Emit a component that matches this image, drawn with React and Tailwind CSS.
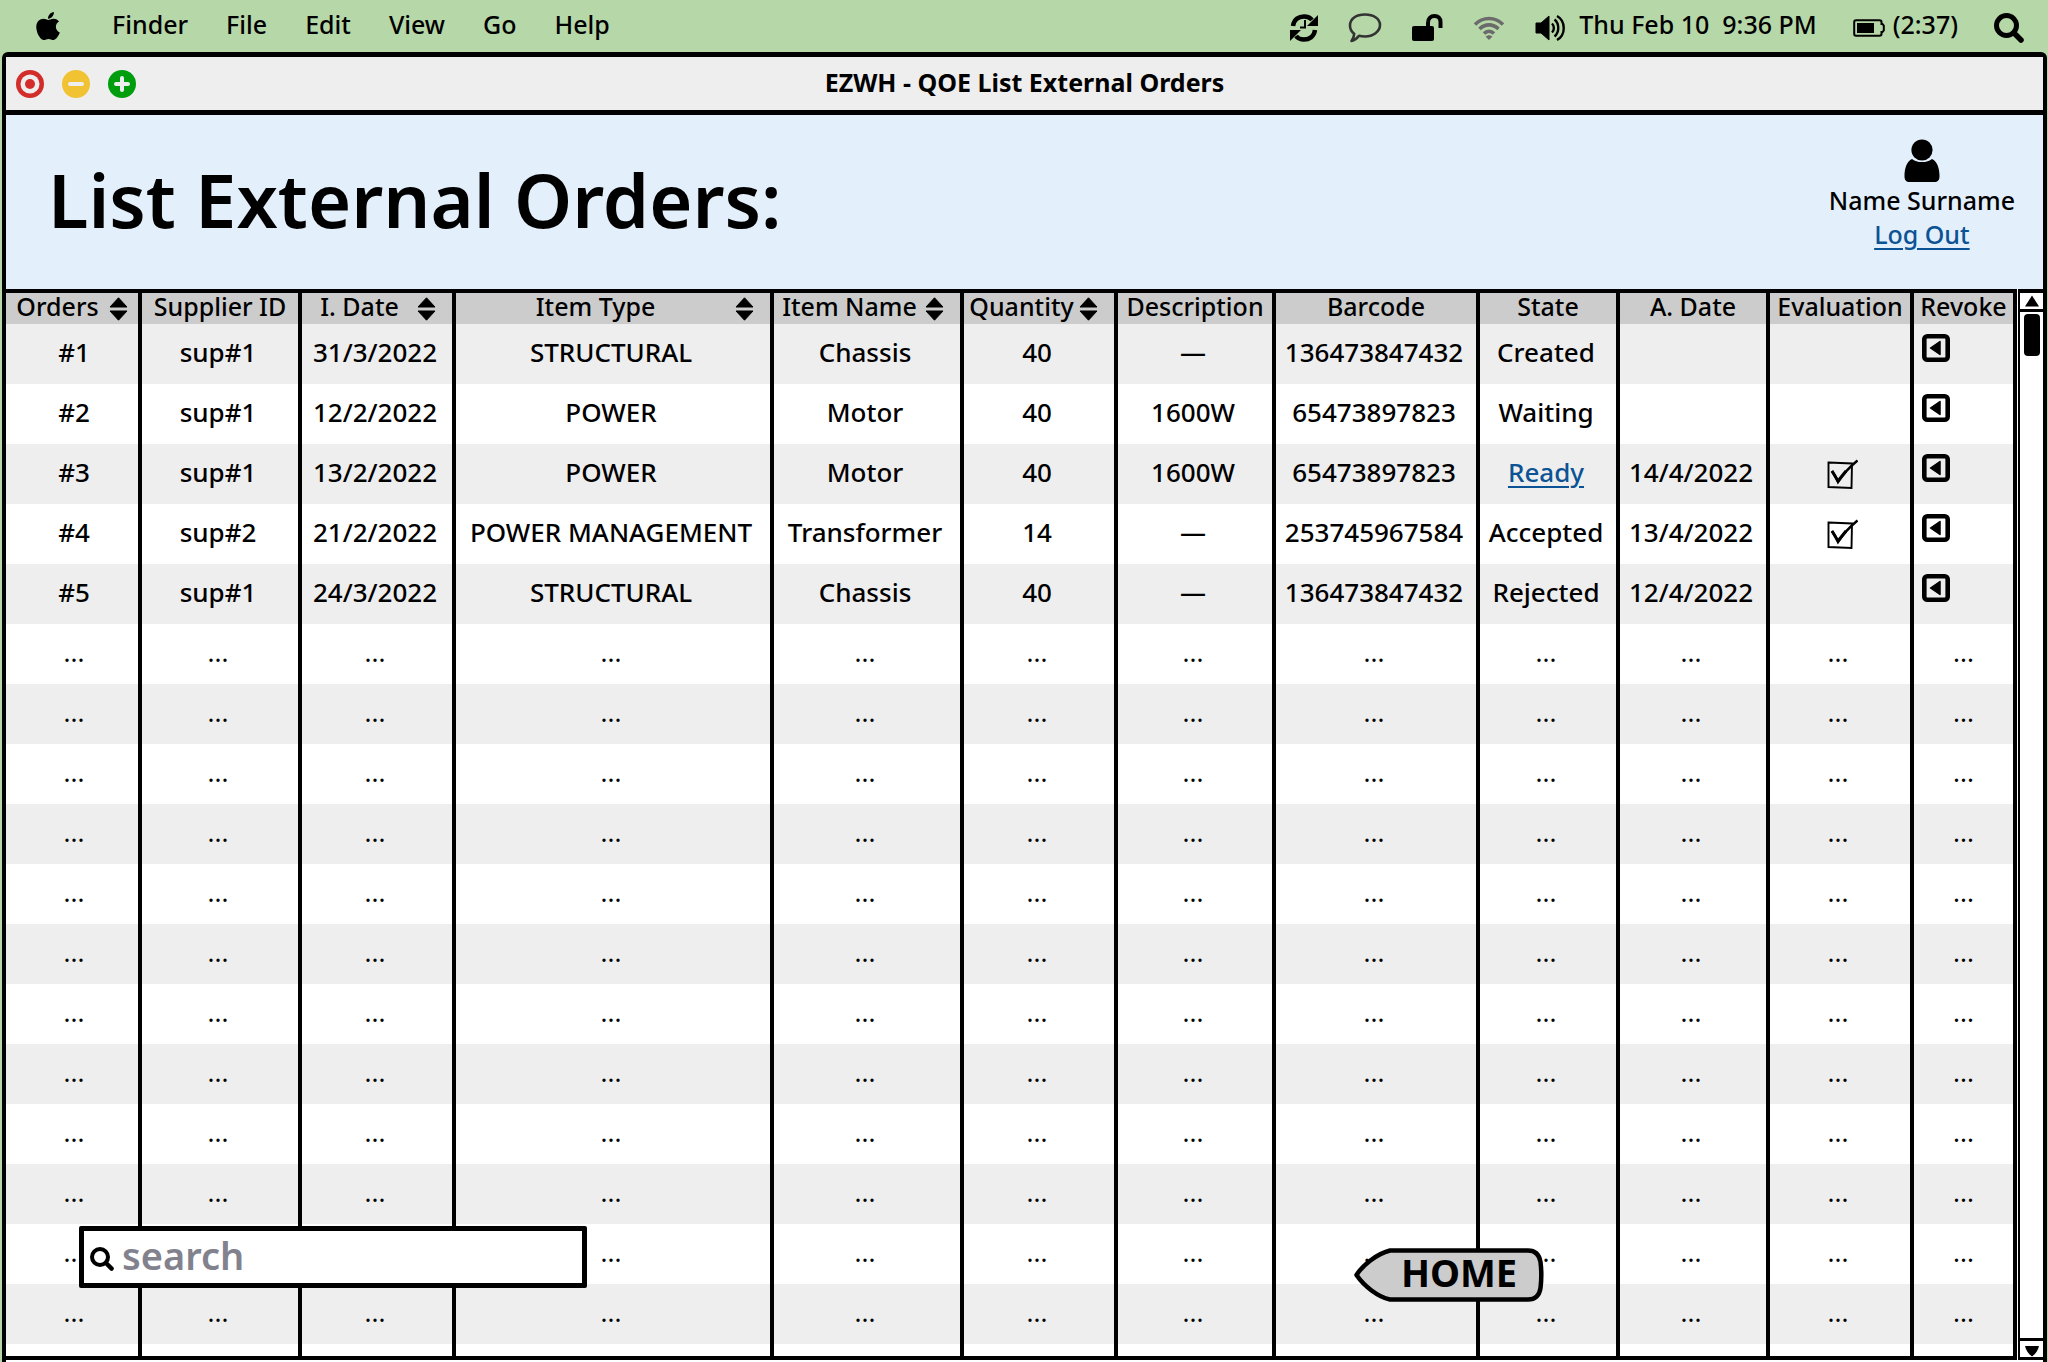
import { FaApple } from "react-icons/fa";

const MENU = ["Finder", "File", "Edit", "View", "Go", "Help"];

const COLUMNS = [
  { label: "Orders", width: "w-[136px]", sort: "pr-[10px]", pad: "pl-1" },
  { label: "Supplier ID", width: "w-[160px]", pad: "pr-1" },
  { label: "I. Date", width: "w-[154px]", sort: "pr-4", pad: "pr-1" },
  { label: "Item Type", width: "w-[318px]", sort: "pr-4", pad: "pr-1" },
  { label: "Item Name", width: "w-[190px]", sort: "pr-4", pad: "pr-1" },
  { label: "Quantity", width: "w-[154px]", sort: "pr-4", pad: "pr-1" },
  { label: "Description", width: "w-[158px]", pad: "pr-1" },
  { label: "Barcode", width: "w-[204px]", pad: "pr-1" },
  { label: "State", width: "w-[140px]", pad: "pr-1" },
  { label: "A. Date", width: "w-[150px]", pad: "pr-1" },
  { label: "Evaluation", width: "w-[144px]", pad: "pr-1" },
  { label: "Revoke", width: "w-[103px]", pad: "p-0" },
];

const ORDERS = [
  ["#1", "sup#1", "31/3/2022", "STRUCTURAL", "Chassis", "40", "—", "136473847432", "Created", "", false],
  ["#2", "sup#1", "12/2/2022", "POWER", "Motor", "40", "1600W", "65473897823", "Waiting", "", false],
  ["#3", "sup#1", "13/2/2022", "POWER", "Motor", "40", "1600W", "65473897823", "Ready", "14/4/2022", true],
  ["#4", "sup#2", "21/2/2022", "POWER MANAGEMENT", "Transformer", "14", "—", "253745967584", "Accepted", "13/4/2022", true],
  ["#5", "sup#1", "24/3/2022", "STRUCTURAL", "Chassis", "40", "—", "136473847432", "Rejected", "12/4/2022", false],
];

const EMPTY_ROWS = Array.from({ length: 12 }, (_, i) => i);

function SyncIcon() {
  return (
    <svg className="h-7 w-7" viewBox="0 0 28 28" fill="none" stroke="black">
      <path d="M3 12C4 5 9 2.500 14 2.500C18 2.500 20.500 4 22 6" strokeWidth="4.500" />
      <path d="M28 1V12H17Z" fill="black" stroke="none" />
      <path d="M25 16C24 23 19 25.500 14 25.500C10 25.500 7.500 24 6 22" strokeWidth="4.500" />
      <path d="M0 27V16H11Z" fill="black" stroke="none" />
      <path d="M15 6V13.500H10" strokeWidth="2" />
    </svg>
  );
}

function ChatIcon() {
  return (
    <svg className="h-[30px] w-[34px]" viewBox="0 0 34 30" fill="none" stroke="#333333" strokeWidth="2.600" strokeLinejoin="round">
      <path d="M17 1.500C26 1.500 32 6 32 12C32 18.500 25 23.500 17 23.500C14.500 23.500 12.500 23.200 11 22.800C9 25.500 6 27.500 3.500 28C5 26 6 23.500 6.200 20.800C3.200 18.500 2 15.500 2 12.500C2 6 8 1.500 17 1.500Z" />
    </svg>
  );
}

function UnlockIcon() {
  return (
    <svg className="h-7 w-[31px]" viewBox="0 0 31 28">
      <rect x="0" y="12" width="22" height="15" rx="2" fill="black" />
      <path d="M16 13V9C16 4 19 2 22.500 2C26 2 28.500 4 28.500 8V14" fill="none" stroke="black" strokeWidth="4" />
    </svg>
  );
}

function WifiIcon() {
  return (
    <svg className="h-6 w-8" viewBox="0 0 32 24" fill="none" stroke="#6b6b6b" strokeWidth="3.600">
      <path d="M2 8.500C10 0.500 22 0.500 30 8.500" />
      <path d="M6.500 13C12 7.500 20 7.500 25.500 13" />
      <path d="M11 17.500C14 14.500 18 14.500 21 17.500" />
      <path d="M16 19L19.500 20.500L16 24L12.500 20.500Z" fill="#6b6b6b" stroke="none" />
    </svg>
  );
}

function VolumeIcon() {
  return (
    <svg className="h-7 w-8" viewBox="0 0 32 28" fill="none" stroke="black" strokeWidth="2.400">
      <path d="M1 9H6L14 2V26L6 19H1Z" fill="black" stroke="black" strokeWidth="1" strokeLinejoin="round" />
      <path d="M17 9.500C19.500 12 19.500 16 17 18.500" />
      <path d="M19.500 5.500C24.500 9.500 24.500 18.500 19.500 22.500" />
      <path d="M22 2C31 7 31 21 22 26" />
    </svg>
  );
}

function BatteryIcon() {
  return (
    <svg className="h-[18px] w-8" viewBox="0 0 32 18">
      <path d="M3 1.200H26.500Q28.500 1.200 28.500 3V5H29.500L30.800 6.500V11.500L29.500 13H28.500V15Q28.500 16.800 26.500 16.800H3Q1.200 16.800 1.200 15V3Q1.200 1.200 3 1.200Z" fill="none" stroke="black" strokeWidth="2" />
      <rect x="4" y="4" width="17" height="10" fill="black" />
    </svg>
  );
}

function SearchIcon({ className }) {
  return (
    <svg className={className} viewBox="0 0 30 30" fill="none" stroke="black" strokeLinecap="round">
      <circle cx="12.500" cy="12.500" r="10" strokeWidth="5" />
      <path d="M20 20L27 27" strokeWidth="5.500" />
    </svg>
  );
}

function SortIcon() {
  return (
    <svg className="h-6 w-[19px] shrink-0" viewBox="0 0 19 24" stroke="black" strokeWidth="1" strokeLinejoin="round">
      <path d="M9.500 0.800L18 10H1Z" />
      <path d="M9.500 23.200L18 14H1Z" />
    </svg>
  );
}

function WindowButtons() {
  return (
    <div className="flex gap-[18px] pl-[10px]">
      <button type="button" aria-label="Close">
        <svg className="h-7 w-7" viewBox="0 0 28 28">
          <circle cx="14" cy="14" r="14" fill="#d32d2b" />
          <circle cx="14" cy="14" r="9.500" fill="#eeeeee" />
          <circle cx="14" cy="14" r="5" fill="#d32d2b" />
        </svg>
      </button>
      <button type="button" aria-label="Minimize">
        <svg className="h-7 w-7" viewBox="0 0 28 28">
          <circle cx="14" cy="14" r="14" fill="#f1c232" />
          <path d="M8 14H20" stroke="#eeeeee" strokeWidth="4" strokeLinecap="round" />
        </svg>
      </button>
      <button type="button" aria-label="Zoom">
        <svg className="h-7 w-7" viewBox="0 0 28 28">
          <circle cx="14" cy="14" r="14" fill="#009e0f" />
          <path d="M8 14H20M14 8V20" stroke="#eeeeee" strokeWidth="4" strokeLinecap="round" />
        </svg>
      </button>
    </div>
  );
}

function EvaluatedBox({ order }) {
  return (
    <label className="relative inline-block h-[30px] w-8 align-middle">
      <input type="checkbox" defaultChecked aria-label={`Evaluation of order ${order}`} className="absolute inset-0 h-full w-full appearance-none" />
      <svg className="pointer-events-none absolute inset-0 h-full w-full" viewBox="0 0 32 30" fill="none" stroke="black">
        <path d="M2.500 3.500L26 4.500L25.500 29L2.500 28Z" strokeWidth="1.900" />
        <path d="M6 12C8 15 10 18.500 12 23C16.500 16 23 8.500 31.500 1.500" strokeWidth="2.400" />
        <path d="M6 12L12 22L20 12" strokeWidth="3" />
      </svg>
    </label>
  );
}

function RevokeButton({ order }) {
  return (
    <button type="button" aria-label={`Revoke order ${order}`} className="ml-2 mt-[10px] block h-7 w-7">
      <svg className="h-7 w-7" viewBox="0 0 28 28">
        <rect x="2.300" y="2.300" width="23.400" height="23.400" rx="3" fill="none" stroke="black" strokeWidth="4.600" />
        <path d="M8.500 14L18 7.500V20.500Z" fill="black" stroke="black" strokeWidth="1.500" strokeLinejoin="round" />
      </svg>
    </button>
  );
}

const cell = "h-[60px] border-r-4 border-black pb-1 text-center whitespace-nowrap";

function OrdersTable() {
  return (
    <table className="w-full table-fixed border-separate border-spacing-0 text-[26px] leading-8">
      <colgroup>
        {COLUMNS.map((c) => (
          <col key={c.label} className={c.width} />
        ))}
      </colgroup>
      <thead>
        <tr className="bg-[#cccccc] text-[25px] leading-[27px]">
          {COLUMNS.map((c) => (
            <th key={c.label} scope="col" className="h-[35px] border-t-4 border-r-4 border-black p-0 font-medium whitespace-nowrap">
              {c.sort ? (
                <button type="button" className={`flex w-full items-center ${c.sort}`}>
                  <span className="flex-1 pb-1 text-center">{c.label}</span>
                  <SortIcon />
                </button>
              ) : (
                <div className="flex justify-center pb-1">{c.label}</div>
              )}
            </th>
          ))}
        </tr>
      </thead>
      <tbody>
        {ORDERS.map((o) => (
          <tr key={o[0]} className="odd:bg-[#eeeeee] even:bg-white">
            {o.slice(0, 10).map((v, i) => (
              <td key={i} className={`${cell} ${COLUMNS[i].pad}`}>
                {v === "Ready" ? (
                  <a href="#ready" className="text-[#0b5394] underline decoration-2 underline-offset-4">
                    {v}
                  </a>
                ) : (
                  v
                )}
              </td>
            ))}
            <td className="border-r-4 border-black pb-1 pl-1 text-center">{o[10] && <EvaluatedBox order={o[0]} />}</td>
            <td className="border-r-4 border-black align-top">
              <RevokeButton order={o[0]} />
            </td>
          </tr>
        ))}
        {EMPTY_ROWS.map((r) => (
          <tr key={r} className="font-normal odd:bg-[#eeeeee] even:bg-white">
            {COLUMNS.map((c) => (
              <td key={c.label} className={`${cell} ${c.pad}`}>
                ...
              </td>
            ))}
          </tr>
        ))}
        <tr className="bg-white">
          {COLUMNS.map((c) => (
            <td key={c.label} className="h-4 border-r-4 border-b-4 border-black p-0" />
          ))}
        </tr>
      </tbody>
    </table>
  );
}

function ScrollBar() {
  return (
    <div className="ml-px flex w-[25px] shrink-0 flex-col border-t-4 border-b-3 border-l-2 border-black bg-white">
      <button type="button" aria-label="Scroll up" className="flex h-[19px] w-full items-center justify-center border-b-3 border-black">
        <svg className="h-3 w-4" viewBox="0 0 16 12">
          <path d="M8 0.500L15 11.500H1Z" />
        </svg>
      </button>
      <div className="flex flex-1 justify-center pt-[2px]">
        <div className="h-[42px] w-4 rounded-sm bg-black" />
      </div>
      <button type="button" aria-label="Scroll down" className="flex h-[19px] w-full items-end justify-center border-t-3 border-black">
        <svg className="h-3 w-4" viewBox="0 0 16 12">
          <path d="M1 1H15C14 5 12 9 8 11.500C4 9 2 5 1 1Z" />
        </svg>
      </button>
    </div>
  );
}

export default function App() {
  return (
    <div className="flex min-h-screen flex-col bg-[#b6d7a8] font-['Noto_Sans','Open_Sans',sans-serif] font-medium text-black">
      <header className="flex h-[52px] items-center justify-between pr-6 pl-8 text-[25px] leading-8">
        <nav className="flex items-center gap-[38px] pb-1">
          <button type="button" aria-label="Apple menu" className="mr-[10px] pt-1">
            <FaApple className="h-8 w-8" />
          </button>
          {MENU.map((m) => (
            <button key={m} type="button">
              {m}
            </button>
          ))}
        </nav>
        <div className="flex items-center">
          <div className="flex items-center gap-[30px] pt-1">
            <SyncIcon />
            <ChatIcon />
            <UnlockIcon />
            <WifiIcon />
            <VolumeIcon />
          </div>
          <span className="ml-3 pb-1 whitespace-pre">Thu Feb 10  9:36 PM</span>
          <span className="ml-9 pt-1">
            <BatteryIcon />
          </span>
          <span className="ml-2 pb-1">(2:37)</span>
          <button type="button" aria-label="Search" className="ml-9 pt-1">
            <SearchIcon className="h-[30px] w-[30px]" />
          </button>
        </div>
      </header>

      <main className="relative mr-px ml-[2px] flex flex-1 flex-col rounded-t-md border-x-4 border-t-5 border-black bg-white">
        <div className="grid h-[58px] grid-cols-[1fr_auto_1fr] items-center border-b-5 border-black bg-[#eeeeee]">
          <WindowButtons />
          <h1 className="pb-1 text-[25px] leading-8 font-bold">EZWH - QOE List External Orders</h1>
        </div>

        <section className="flex h-[174px] items-center justify-between bg-[#e3effb] pr-7 pl-[42px]">
          <h2 className="pb-1 text-[74px] leading-[96px] font-semibold">List External Orders:</h2>
          <div className="flex flex-col items-center pb-[14px] text-[25px] leading-[34px]">
            <svg className="h-[44px] w-9" viewBox="0 0 36 44">
              <path d="M8 20C12 24 24 24 28 20C33 22 35.500 29 35.500 37C35.500 41 34 43 30 43H6C2 43 0.500 41 0.500 37C0.500 29 3 22 8 20Z" />
              <circle cx="18" cy="11.500" r="11.500" fill="#e3effb" />
              <circle cx="18" cy="11" r="10.600" />
            </svg>
            <span>Name Surname</span>
            <a href="#logout" className="text-[#0b5394] underline decoration-2 underline-offset-4">
              Log Out
            </a>
          </div>
        </section>

        <div className="flex">
          <div className="min-w-0 flex-1">
            <OrdersTable />
          </div>
          <ScrollBar />
        </div>

        <label className="absolute bottom-[74px] left-[73px] flex h-[62px] w-[508px] items-center gap-2 rounded-xs border-5 border-black bg-white pt-1 pl-[6px]">
          <SearchIcon className="h-6 w-6 shrink-0" />
          <input
            type="text"
            aria-label="Search orders"
            placeholder="search"
            className="min-w-0 flex-1 bg-transparent pb-2 text-[38px] leading-[44px] font-semibold outline-none placeholder:text-[#82828e]"
          />
        </label>

        <button type="button" className="absolute right-[499px] bottom-[60px] flex h-[54px] w-[190px] items-center justify-center pb-[6px] pl-5 text-[38px] leading-[44px] font-bold">
          <svg className="absolute inset-0 h-full w-full" viewBox="0 0 190 54">
            <path
              d="M36 2.500H174C182 2.500 185.500 8 186.500 14C187.500 22 187.500 32 186.500 40C185.500 47 182 51.500 174 51.500H36C24 49 10 38 2.500 27C8 18 22 6 36 2.500Z"
              fill="#cccccc"
              stroke="black"
              strokeWidth="4.500"
              strokeLinejoin="round"
            />
          </svg>
          <span className="relative">HOME</span>
        </button>
      </main>
    </div>
  );
}
